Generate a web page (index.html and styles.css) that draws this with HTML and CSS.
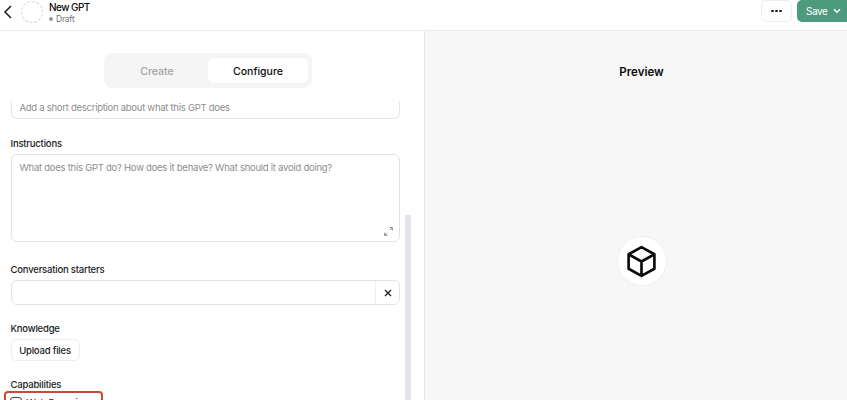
FILE: index.html
```html
<!DOCTYPE html>
<html lang="en">
<head>
<meta charset="utf-8">
<title>New GPT</title>
<link rel="stylesheet" href="styles.css">
</head>
<body>
<div class="app">
  <header class="topbar">
    <div class="topbar-left">
      <svg class="back" width="10" height="16" viewBox="0 0 10 16"><path d="M8 2 L2 8 L8 14" fill="none" stroke="#222" stroke-width="1.6"/></svg>
      <div class="avatar"></div>
      <div class="title">
        <div class="name">New GPT</div>
        <div class="status"><span class="dot"></span>Draft</div>
      </div>
    </div>
    <div class="topbar-right">
      <button class="more"><span></span><span></span><span></span></button>
      <button class="save">Save
        <svg width="8" height="6" viewBox="0 0 8 6"><path d="M1 1.2 L4 4.2 L7 1.2" fill="none" stroke="#fff" stroke-width="1.4"/></svg>
      </button>
    </div>
  </header>
  <main class="main">
    <section class="editor">
      <div class="tabs-row">
        <div class="tabs">
          <div class="tab">Create</div>
          <div class="tab active">Configure</div>
        </div>
      </div>
      <div class="form">
        <div class="field-desc">Add a short description about what this GPT does</div>
        <div class="label label-instructions">Instructions</div>
        <div class="textarea">What does this GPT do? How does it behave? What should it avoid doing?
          <svg class="expand" width="9" height="9" viewBox="0 0 9 9"><path d="M5.6 0.6 H8.4 V3.4 M3.4 8.4 H0.6 V5.6 M8.2 0.8 L5.8 3.2 M0.8 8.2 L3.2 5.8" fill="none" stroke="#888" stroke-width="1"/></svg>
        </div>
        <div class="label label-starters">Conversation starters</div>
        <div class="starter">
          <div class="starter-input"></div>
          <div class="starter-x"><svg width="8" height="8" viewBox="0 0 8 8"><path d="M1 1 L7 7 M7 1 L1 7" stroke="#222" stroke-width="1.4"/></svg></div>
        </div>
        <div class="label label-knowledge">Knowledge</div>
        <button class="upload">Upload files</button>
        <div class="label label-capabilities">Capabilities</div>
        <div class="capability"><span class="check"></span>Web Browsing</div>
      </div>
      <div class="scrollbar"></div>
    </section>
    <section class="preview">
      <h2 class="preview-title">Preview</h2>
      <div class="preview-center">
        <div class="cube">
          <svg width="31" height="33" viewBox="0 0 30 32"><path d="M15 2 L27.5 9 V23 L15 30 L2.5 23 V9 Z M2.5 9 L15 16 L27.5 9 M15 16 V30" fill="none" stroke="#0d0d0d" stroke-width="2.6" stroke-linejoin="round"/></svg>
        </div>
      </div>
    </section>
  </main>
</div>
</body>
</html>
```
FILE: styles.css
```css
* { box-sizing: border-box; }
html, body { margin: 0; height: 100%; overflow: hidden; }
body { font-family: Inter, "Liberation Sans", sans-serif; color: #0d0d0d; background: #fff; }
button { font-family: inherit; cursor: pointer; }
.app { width: 847px; height: 400px; display: flex; flex-direction: column; overflow: hidden; }
.topbar { height: 31px; flex: none; display: flex; justify-content: space-between; align-items: flex-start; border-bottom: 1px solid #ececec; }
.topbar-left { display: flex; align-items: center; height: 24px; padding-left: 3px; }
.back { margin-right: 8px; }
.avatar { width: 22px; height: 22px; border-radius: 50%; border: 1px dashed #d4d4d4; margin-right: 6px; }
.title { display: flex; flex-direction: column; margin-top: 1px; }
.name { font-size: 10px; font-weight: 500; line-height: 13px; letter-spacing: -0.55px; }
.status { font-size: 8.5px; color: #777; line-height: 11px; display: flex; align-items: center; letter-spacing: -0.25px; }
.dot { width: 4px; height: 4px; border-radius: 50%; background: #999; margin-right: 3px; }
.topbar-right { display: flex; align-items: center; gap: 5px; }
.more { width: 31px; height: 22px; border: 1px solid #eee; border-radius: 5px; background: #fff; display: flex; align-items: center; justify-content: center; gap: 1.6px; padding: 0; }
.more span { width: 2.4px; height: 2.4px; background: #222; border-radius: 50%; }
.save { width: 50px; height: 22px; border: 0; border-radius: 5px 0 0 5px; background: #4d9a7f; color: #fff; font-size: 10px; display: flex; align-items: center; gap: 5px; padding: 0 0 0 9px; letter-spacing: -0.4px; }
.main { flex: 1; display: flex; min-height: 0; }
.editor { width: 425px; flex: none; border-right: 1px solid #e6e6e6; position: relative; display: flex; flex-direction: column; overflow: hidden; }
.tabs-row { display: flex; justify-content: flex-start; padding: 22px 0 0 104px; }
.tabs { width: 208px; height: 35px; background: #f5f5f5; border-radius: 8px; padding: 5px 4px; display: flex; gap: 2px; }
.tab { flex: 1; display: flex; align-items: center; justify-content: center; padding-top: 1px; font-size: 10.5px; font-weight: 500; color: #a3a3a3; border-radius: 5px; }
.tab.active { background: #fff; color: #0d0d0d; flex: 0 0 100px; box-shadow: 0 0 1px rgba(0,0,0,0.08); }
.form { padding: 13px 0 0 10.5px; width: 400px; }
.field-desc { height: 18px; border: 1px solid #e6e6e6; border-top: 0; border-radius: 0 0 6px 6px; font-size: 9.5px; letter-spacing: -0.27px; color: #8e8e8e; padding: 0 0 0 8px; line-height: 14px; }
.label { font-size: 9.5px; font-weight: 500; line-height: 12px; color: #222; letter-spacing: -0.2px; }
.label-instructions { margin-top: 19px; }
.textarea { position: relative; height: 88px; margin-top: 4px; border: 1px solid #e3e3e3; border-radius: 6px; font-size: 9.5px; letter-spacing: -0.26px; line-height: 14px; color: #8e8e8e; padding: 6px 8px; }
.expand { position: absolute; right: 6px; bottom: 5px; }
.label-starters { margin-top: 22px; }
.starter { display: flex; height: 25px; margin-top: 4px; border: 1px solid #e3e3e3; border-radius: 6px; }
.starter-input { flex: 1; }
.starter-x { width: 24px; border-left: 1px solid #eee; display: flex; align-items: center; justify-content: center; }
.label-knowledge { margin-top: 18px; }
.upload { display: block; width: 69px; height: 22px; margin-top: 4px; padding: 0; border: 1px solid #eee; border-radius: 5px; background: #fff; font-size: 9.5px; font-weight: 500; color: #222; letter-spacing: -0.2px; }
.label-capabilities { margin-top: 18px; }
.capability { width: 99px; height: 30px; margin: 0 0 0 -7px; border: 2px solid #c84b37; border-radius: 4px; font-size: 9.5px; color: #222; padding: 4px 0 0 4px; display: flex; gap: 5px; line-height: 12px; letter-spacing: -0.2px; }
.check { width: 12px; height: 12px; border: 1px solid #444; border-radius: 3px; flex: none; }
.scrollbar { position: absolute; left: 405px; top: 184px; width: 6px; height: 200px; background: #e2e2e8; }
.preview { flex: 1; background: #f7f7f7; display: flex; flex-direction: column; align-items: center; padding-left: 11px; }
.preview-title { margin: 34px 0 0; font-size: 11.5px; font-weight: 600; line-height: 15px; }
.preview-center { flex: 1; display: flex; align-items: flex-start; justify-content: center; padding-top: 156px; }
.cube { width: 50px; height: 50px; border-radius: 50%; background: #fff; border: 1px solid #f0f0f0; display: flex; align-items: center; justify-content: center; }
```
